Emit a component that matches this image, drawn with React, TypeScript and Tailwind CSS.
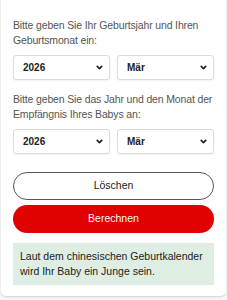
import { ChevronDown } from "lucide-react";

const font = { fontFamily: '"Liberation Sans", Arial, sans-serif' };

function Select({ value }: { value: string }) {
  return (
    <div className="flex h-[25px] flex-1 items-center justify-between rounded-[3px] border border-[#dcdcdc] bg-white pl-[9px] pr-[5px] shadow-[0_1px_2px_rgba(0,0,0,0.06)]">
      <span className="text-[10px] font-semibold text-[#222]">{value}</span>
      <ChevronDown className="size-[9px] text-[#222]" strokeWidth={4.5} />
    </div>
  );
}

export default function App() {
  return (
    <div className="min-h-[300px] bg-[#f7f7f7] px-[1px]" style={font}>
      <div className="rounded-b-[5px] bg-white px-3 pb-[11px] pt-[18px] shadow-[0_1px_2px_rgba(0,0,0,0.15)]">
        <p className="text-[10.5px] leading-[15px] tracking-[-0.15px] text-[#555]">
          Bitte geben Sie Ihr Geburtsjahr und Ihren Geburtsmonat ein:
        </p>
        <div className="mt-[7px] flex gap-[7px]">
          <Select value="2026" />
          <Select value="Mär" />
        </div>
        <p className="mt-[12px] text-[10.5px] leading-[15px] tracking-[-0.15px] text-[#555]">
          Bitte geben Sie das Jahr und den Monat der Empfängnis Ihres Babys an:
        </p>
        <div className="mt-[7px] flex gap-[7px]">
          <Select value="2026" />
          <Select value="Mär" />
        </div>
        <button className="mt-[18px] flex h-[28px] w-full items-center justify-center rounded-full border border-[#555] bg-white text-[10.5px] text-[#222]">
          Löschen
        </button>
        <button className="mt-[5px] flex h-[28px] w-full items-center justify-center rounded-full bg-[#e00000] text-[10.5px] text-white">
          Berechnen
        </button>
        <div className="mt-[10px] bg-[#deeee3] px-[7px] py-[6px] text-[10.5px] leading-[15px] text-[#222]">
          Laut dem chinesischen Geburtkalender wird Ihr Baby ein Junge sein.
        </div>
      </div>
    </div>
  );
}
